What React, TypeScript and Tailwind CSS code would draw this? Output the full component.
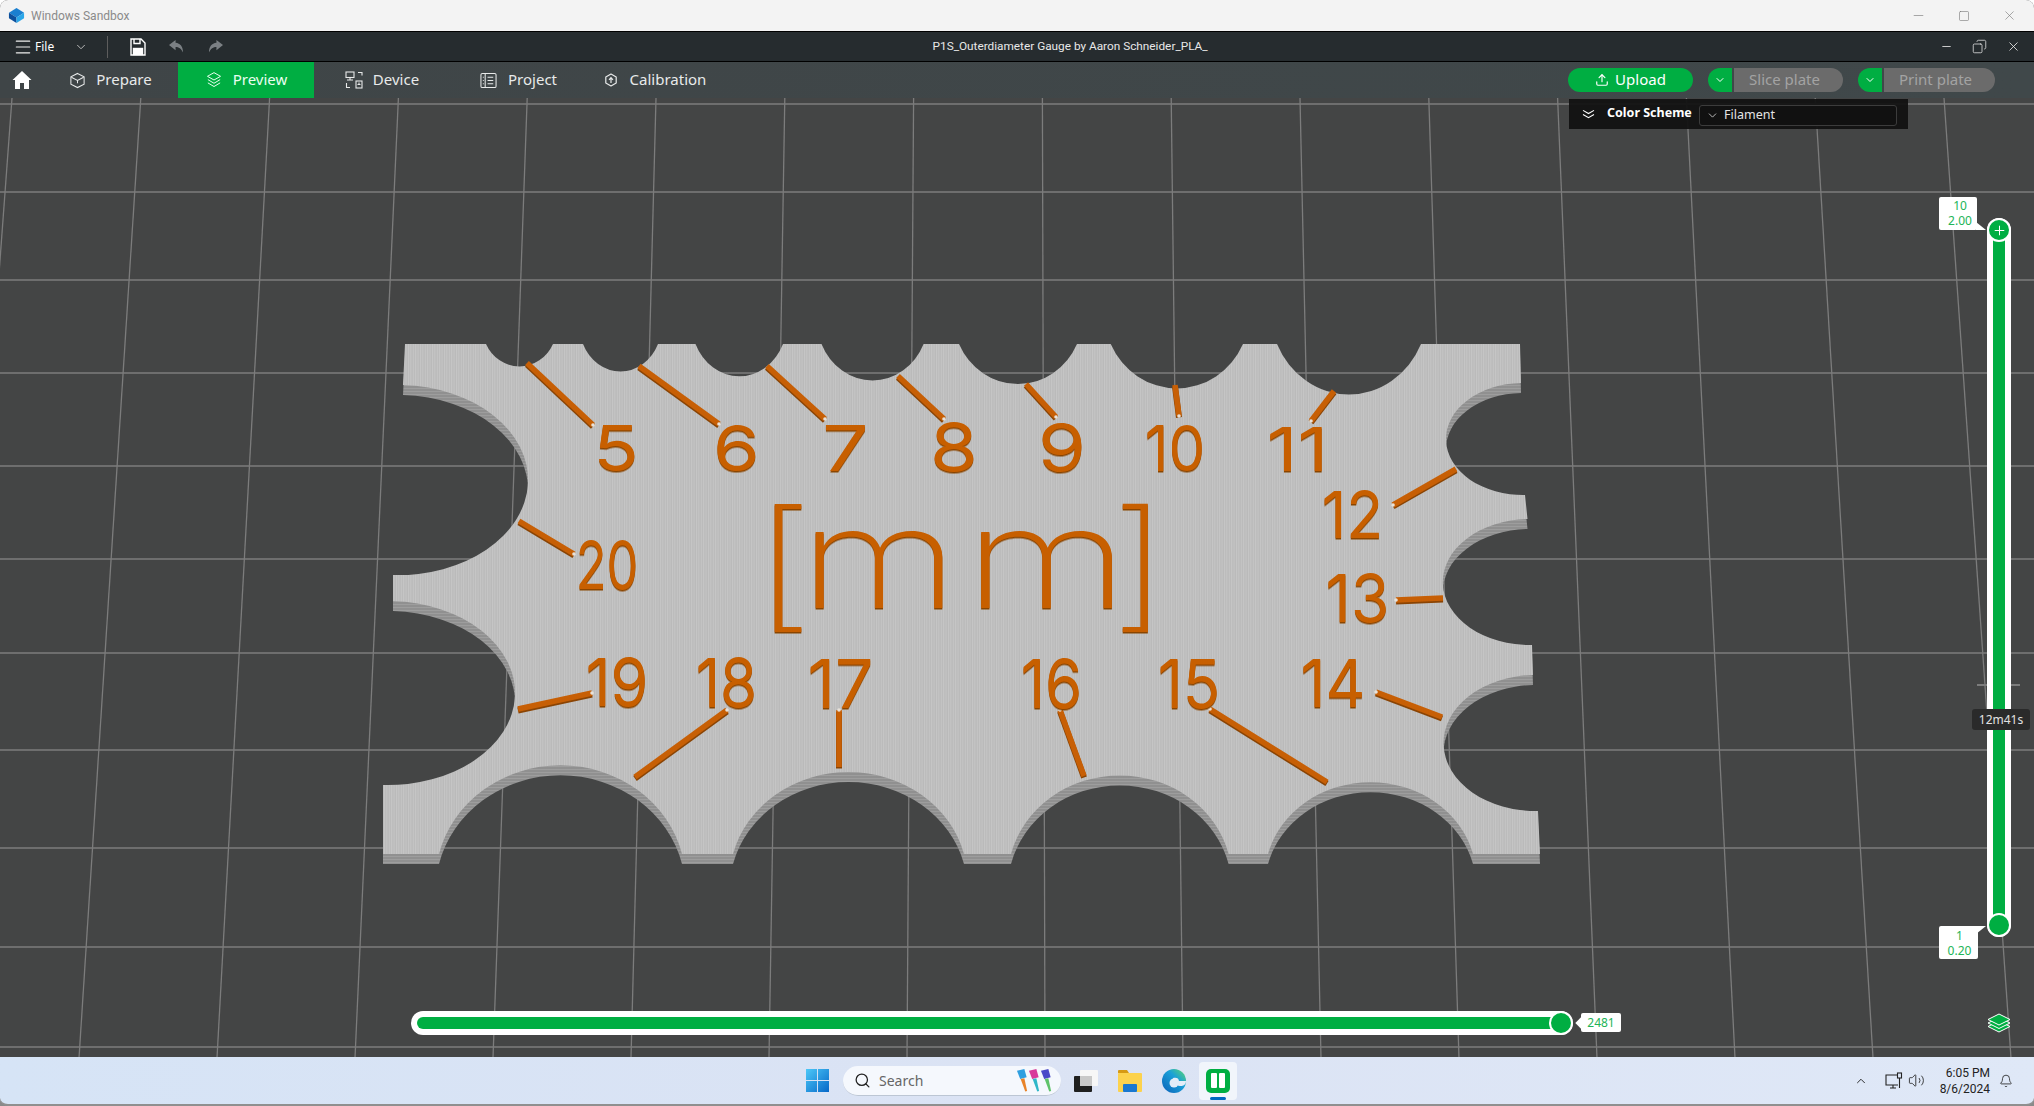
import { Bell, ChevronDown, ChevronUp, Copy, Menu, Minus, Plus, Search, Square, Upload, Volume2, X } from "lucide-react";
import React from "react";

const PLATE =
  "M405 344 H486 A37 39 0 0 0 553 344 H583 A41 46 0 0 0 658 344 H695.5 A48 55 0 0 0 783 344 H821.5 A56 62 0 0 0 923.6 344 H959 A65 69 0 0 0 1077 344 H1110.7 A73 77 0 0 0 1243 344 H1277 A79 86 0 0 0 1421 344 H1520 L1521 383 A77 56 0 0 0 1525 495 L1527.5 519 A87 63 0 0 0 1532 645 L1533 675 A92 68 0 0 0 1538 811 L1540 854 H1473 A105.7 95 0 0 0 1268 854 H1228.6 A112 103 0 0 0 1011 854 H964 A119 108 0 0 0 733 854 H682 A125 116 0 0 0 439 854 H383 L383 785 A127 92 0 0 0 393 601 L393 575 A130 95 0 0 0 403 385 Z";

const H_LINES = [104, 192, 280, 373, 466, 559, 653, 750, 848, 947, 1047];
const V_LINES = Array.from({ length: 16 }, (_, k) => k);

// text, left, right, top, bottom of the printed number
const LABELS: [string, number, number, number, number][] = [
  ["5", 597, 635, 425, 471],
  ["6", 717, 756, 425, 471],
  ["7", 826, 865, 425, 471],
  ["8", 934, 974, 423, 471],
  ["9", 1042, 1082, 424, 471],
  ["10", 1148, 1202, 425, 471],
  ["11", 1270, 1325, 427, 471],
  ["12", 1325, 1380, 491, 538],
  ["13", 1329, 1386, 574, 622],
  ["14", 1304, 1362, 659, 707],
  ["15", 1161, 1217, 659, 708],
  ["16", 1024, 1079, 659, 708],
  ["17", 811, 870, 659, 708],
  ["18", 699, 754, 658, 707],
  ["19", 589, 645, 658, 706],
  ["20", 579, 635, 541, 589],
];

const LEADERS: [number, number, number, number][] = [
  [527, 363, 593, 425],
  [639, 366, 719, 424],
  [767, 366, 825, 419],
  [898, 376, 944, 419],
  [1026, 384, 1056, 417],
  [1175, 385, 1179, 416],
  [1334, 391, 1311, 421],
  [1456, 469, 1393, 505],
  [1443, 598, 1396, 600],
  [1442, 717, 1376, 692],
  [1327, 782, 1210, 709],
  [1084, 776, 1060, 710],
  [839, 767, 839, 710],
  [635, 777, 727, 710],
  [518, 709, 592, 693],
  [519, 521, 574, 554],
];

const Scene = () => (
  <svg viewBox="0 62 2034 995" className="absolute inset-0 w-full h-full">
    <defs>
      <pattern id="hatch" width="2.4" height="4" patternUnits="userSpaceOnUse">
        <rect width="2.4" height="4" fill="#bababa" />
        <rect width="1" height="4" fill="#c6c6c6" />
      </pattern>
      <pattern id="wall" width="4" height="3" patternUnits="userSpaceOnUse">
        <rect width="4" height="3" fill="#909090" />
        <rect width="4" height="1" fill="#9d9d9d" />
      </pattern>
      <filter id="bead" x="-10%" y="-10%" width="120%" height="120%">
        <feDropShadow dx="0" dy="1.5" stdDeviation="0" floodColor="#8a4404" />
      </filter>
    </defs>
    <rect x="0" y="62" width="2034" height="995" fill="#444545" />
    {H_LINES.map((y) => (
      <line key={y} x1="0" x2="2034" y1={y} y2={y} stroke="#7c7c7c" strokeWidth="1.6" />
    ))}
    {V_LINES.map((k) => (
      <line
        key={k}
        x1={12 + 128.8 * k}
        y1="98"
        x2={-59 + 138 * k}
        y2="1058"
        stroke="#7c7c7c"
        strokeWidth="1.3"
      />
    ))}
    <path d={PLATE} transform="translate(0 10)" fill="url(#wall)" />
    <path d={PLATE} fill="url(#hatch)" />
    {LEADERS.map(([x1, y1, x2, y2], i) => (
      <g key={i}>
        <line x1={x1} y1={y1 + 1.5} x2={x2} y2={y2 + 1.5} stroke="#8a4404" strokeWidth="6" />
        <line x1={x1} y1={y1} x2={x2} y2={y2} stroke="#c75f05" strokeWidth="5.5" />
        <circle cx={x2} cy={y2} r="1.8" fill="#e8e2da" />
      </g>
    ))}
    {LABELS.map(([t, x0, x1, y0, y1]) => {
      const w = x1 - x0;
      const pad = w * (t.length > 1 ? 0.06 : 0.1);
      return (
        <text
          key={t}
          x={x0 - pad}
          y={y1}
          fontSize={(y1 - y0) / 0.727}
          fontFamily="Inter"
          fontWeight={400}
          textLength={w + pad * 2}
          lengthAdjust="spacingAndGlyphs"
          fill="#c75f05"
          filter="url(#bead)"
        >
          {t}
        </text>
      );
    })}
    <text fontFamily="Inter" fontSize="139" fill="#c75f05" filter="url(#bead)">
      <tspan x="750" y="612" fontWeight="100" stroke="#c75f05" strokeWidth="2" textLength="66" lengthAdjust="spacingAndGlyphs">
        [
      </tspan>
      <tspan x="799" y="608" fontWeight="200" textLength="160" lengthAdjust="spacingAndGlyphs">
        m
      </tspan>
      <tspan x="964" y="608" fontWeight="200" textLength="165" lengthAdjust="spacingAndGlyphs">
        m
      </tspan>
      <tspan x="1109" y="612" fontWeight="100" stroke="#c75f05" strokeWidth="2" textLength="62" lengthAdjust="spacingAndGlyphs">
        ]
      </tspan>
    </text>
  </svg>
);

const LayersIcon = ({ className }: { className: string }) => (
  <svg viewBox="0 0 22 22" fill="none" stroke="currentColor" strokeWidth="1.2" className={className}>
    <path d="M11 2 19 6.5 11 11 3 6.5Z" />
    <path d="M3.5 10.5 11 15l7.5-4.5" />
    <path d="M3.5 14.5 11 19l7.5-4.5" />
  </svg>
);

const StackIcon = () => (
  <svg viewBox="0 0 24 24" fill="#00ae42" stroke="white" strokeWidth="1" className="absolute left-[1987px] top-[949px] w-6 h-6">
    <path d="M12 10 23 15.5 12 21 1 15.5Z" />
    <path d="M12 6.5 23 12 12 17.5 1 12Z" />
    <path d="M12 3 23 8.5 12 14 1 8.5Z" />
  </svg>
);

const PrepareIcon = () => (
  <svg viewBox="0 0 18 18" fill="none" stroke="currentColor" strokeWidth="1.1" className="w-[17px] h-[17px]">
    <path d="M9 1.5 16 5v8l-7 3.5L2 13V5Z" />
    <path d="M2.5 5.5 9 9l6.5-3.5M9 9v3" />
  </svg>
);

const DeviceIcon = () => (
  <svg viewBox="0 0 18 18" fill="none" stroke="currentColor" strokeWidth="1.1" className="w-[18px] h-[18px]">
    <rect x="1" y="1" width="8" height="5.5" />
    <path d="M5 6.5V9M2 9h6M13 1.5h4v3M1.5 12v4.5H5" />
    <rect x="11" y="10" width="6" height="7" />
    <path d="M12.5 13.5h3M14 11.5v2" />
  </svg>
);

const ProjectIcon = () => (
  <svg viewBox="0 0 18 18" fill="none" stroke="currentColor" strokeWidth="1.1" className="w-[17px] h-[17px]">
    <rect x="1" y="1.5" width="16" height="15" rx="1.5" />
    <path d="M5.5 2v14M8 5.5h6M8 9h6M8 12.5h6M3 5.5h1M3 9h1M3 12.5h1" />
  </svg>
);

const CalibrationIcon = () => (
  <svg viewBox="0 0 14 14" fill="none" stroke="currentColor" strokeWidth="1.2" className="w-[14px] h-[14px]">
    <path d="M7 1 12.2 4v6L7 13 1.8 10V4Z" strokeLinejoin="round" />
    <path d="M7 10V5M5 6.8 7 4.6l2 2.2" />
  </svg>
);

const HomeIcon = () => (
  <svg viewBox="0 0 20 20" fill="white" className="w-5 h-5">
    <path d="M10 1 19.5 10H17v9h-5v-6H8v6H3v-9H.5Z" />
  </svg>
);

const SaveIcon = () => (
  <svg viewBox="0 0 16 18" fill="none" stroke="white" strokeWidth="1.4" className="w-4 h-[18px]">
    <path d="M1 1h10l4 4v12H1Z" />
    <path d="M4 1v4.5h6V1" />
    <rect x="3.5" y="10.5" width="9" height="6" fill="white" />
  </svg>
);

const TurnIcon = ({ flip }: { flip?: boolean }) => (
  <svg viewBox="0 0 18 16" fill="#7b8084" className={flip ? "w-[17px] h-[15px] -scale-x-100" : "w-[17px] h-[15px]"}>
    <path d="M8 1 1 6.5 8 12V8.5c3.5 0 6 1.5 8 6 0-6.5-3-10-8-10.5Z" />
  </svg>
);

const Tab = ({
  icon,
  label,
  active,
  width,
  gap,
}: {
  icon: React.ReactNode;
  label: string;
  active?: boolean;
  width: string;
  gap: string;
}) => (
  <div
    className={`flex items-center h-full justify-center text-[15px] ${width} ${gap} ${
      active ? "bg-[#00ae42] text-[#eafff1]" : "text-[#e8eaea]"
    }`}
  >
    {icon}
    <span className="-mt-[2px]">{label}</span>
  </div>
);

const SplitButton = ({ label, width }: { label: string; width: string }) => (
  <div className="flex items-center h-6 gap-[2px]">
    <div className="w-6 h-6 bg-[#00ae42] rounded-l-full flex items-center justify-center">
      <ChevronDown className="w-3 h-3 text-white" strokeWidth={2} />
    </div>
    <div className={`h-6 bg-[#6b6b6b] rounded-r-full flex items-center justify-center pr-[8px] pb-[2px] text-[#a3a3a3] text-[15px] ${width}`}>
      {label}
    </div>
  </div>
);

const Toolbar = () => (
  <div className="relative flex items-center h-9 bg-gradient-to-r from-[#3f4547] to-[#40484a] text-white">
    <div className="w-[43px] flex justify-center pl-[1px]">
      <HomeIcon />
    </div>
    <Tab icon={<PrepareIcon />} label="Prepare" width="w-[135px]" gap="gap-[10px]" />
    <Tab icon={<LayersIcon className="w-[18px] h-[18px]" />} label="Preview" active width="w-[136px]" gap="gap-[10px]" />
    <Tab icon={<DeviceIcon />} label="Device" width="w-[136px]" gap="gap-[10px]" />
    <Tab icon={<ProjectIcon />} label="Project" width="w-[137px]" gap="gap-[11px]" />
    <Tab icon={<CalibrationIcon />} label="Calibration" width="w-[136px]" gap="gap-[12px]" />
    <div className="ml-auto flex items-center gap-[15px] pr-[39px]">
      <div className="w-[125px] h-6 bg-[#00ae42] rounded-full flex items-center justify-center gap-[6px] pb-[1px] text-[15px] text-white">
        <Upload className="w-[14px] h-[14px]" strokeWidth={2} />
        Upload
      </div>
      <SplitButton label="Slice plate" width="w-[109px]" />
      <SplitButton label="Print plate" width="w-[111px]" />
    </div>
  </div>
);

const ColorScheme = () => (
  <div className="absolute left-[1569px] top-[37px] w-[339px] h-[30px] bg-[#121212]/95 flex items-center pl-[13px] text-white">
    <svg viewBox="0 0 14 12" fill="none" stroke="white" strokeWidth="1.2" className="w-[13px] h-[11px]">
      <path d="M1 1.5 7 5l6-3.5M1 6 7 9.5 13 6" />
    </svg>
    <span className="ml-[12px] text-[12.5px] font-bold w-[92px] shrink-0 -mt-[1px]">Color Scheme</span>
    <div className="w-[198px] h-[21px] rounded-[3px] border border-[#3c3c3c] bg-[#111111] flex items-center pl-[6px] mt-[3px]">
      <ChevronDown className="w-[13px] h-[13px] text-[#dddddd]" strokeWidth={1.5} />
      <span className="ml-[5px] text-[12.5px] text-[#e4e4e4]">Filament</span>
    </div>
  </div>
);

const VerticalSlider = () => (
  <>
    <div className="absolute left-[1977px] top-[622px] w-[43px] h-[2px] bg-[#7c7c7c]" />
    <div className="absolute left-[1987px] top-[156px] w-6 h-[719px] bg-white rounded-full flex justify-center py-[12px]">
      <div className="w-3 h-full bg-[#00ae42]" />
    </div>
    <div className="absolute left-[1987px] top-[156px] w-6 h-6 rounded-full bg-[#00ae42] border-2 border-white flex items-center justify-center">
      <Plus className="w-[15px] h-[15px] text-white" strokeWidth={1.6} />
    </div>
    <div className="absolute left-[1987px] top-[851px] w-6 h-6 rounded-full bg-[#00ae42] border-2 border-white" />
    <div className="absolute left-[1939px] top-[135px] w-[38px] h-[33px] bg-white rounded-[2px] flex flex-col items-center justify-center pl-[4px] pb-[2px] text-[12px] leading-[15px] text-[#22b458]">
      <span>10</span>
      <span>2.00</span>
      <svg viewBox="0 0 10 8" className="absolute left-[37px] top-[25px] w-[10px] h-[8px]">
        <path d="M0 0 10 8H0Z" fill="white" />
      </svg>
    </div>
    <div className="absolute left-[1939px] top-[864px] w-[39px] h-[33px] bg-white rounded-[2px] flex flex-col items-center justify-center pl-[2px] text-[12px] leading-[15px] text-[#22b458]">
      <span>1</span>
      <span>0.20</span>
      <svg viewBox="0 0 10 8" className="absolute left-[37px] top-0 w-[10px] h-[8px]">
        <path d="M0 0H10L0 8Z" fill="white" />
      </svg>
    </div>
    <div className="absolute left-[1972px] top-[647px] w-[58px] h-[21px] bg-[#2a2a2a] rounded-[3px] text-[#e2e2e2] text-[12px] flex items-center justify-center">
      12m41s
    </div>
    <StackIcon />
  </>
);

const HorizontalSlider = () => (
  <>
    <div className="absolute left-[411px] top-[949px] w-[1162px] h-6 bg-white rounded-full flex items-center pl-[6px] pr-[12px]">
      <div className="flex-1 h-3 bg-[#00ae42] rounded-l-full" />
    </div>
    <div className="absolute left-[1549px] top-[949px] w-6 h-6 rounded-full bg-[#00ae42] border-2 border-white" />
    <div className="absolute left-[1581px] top-[951px] w-10 h-[19px] bg-white rounded-[2px] flex items-center justify-center text-[12px] text-[#22b458]">
      2481
      <div className="absolute -left-[4px] top-[6px] w-2 h-2 bg-white rotate-45" />
    </div>
  </>
);

const WindowsLogo = () => (
  <svg viewBox="0 0 24 24" className="w-[23px] h-[23px]">
    <defs>
      <linearGradient id="win" x1="0" y1="0" x2="1" y2="1">
        <stop offset="0" stopColor="#4cc8f8" />
        <stop offset="1" stopColor="#0668c8" />
      </linearGradient>
    </defs>
    <path d="M0 0h11.5v11.5H0ZM12.5 0H24v11.5H12.5ZM0 12.5h11.5V24H0ZM12.5 12.5H24V24H12.5Z" fill="url(#win)" />
  </svg>
);

const Brush = ({ head, handle }: { head: string; handle: string }) => (
  <svg viewBox="0 0 14 26" className="w-[13px] h-[24px] -mr-[1px]">
    <path d="M1 3 9 1l2.5 9-7 2Z" fill={head} />
    <path d="M5 12l4-1 3 14-2 .5Z" fill={handle} />
  </svg>
);

const TaskIcon = () => (
  <svg viewBox="0 0 24 22" className="w-6 h-[22px]">
    <rect x="6" y="0" width="18" height="16" rx="1" fill="#f7f7f7" />
    <rect x="0" y="6" width="18" height="16" rx="1" fill="#1f1f1f" />
    <rect x="6" y="6" width="12" height="10" fill="#c9c9c9" />
  </svg>
);

const FolderIcon = () => (
  <svg viewBox="0 0 24 22" className="w-6 h-[22px]">
    <path d="M0 1a1 1 0 0 1 1-1h8l2 3H0Z" fill="#d69a14" />
    <rect x="0" y="3" width="24" height="19" rx="1" fill="#fcd24d" />
    <rect x="5" y="14" width="14" height="8" rx="1" fill="#1a78d0" />
  </svg>
);

const EdgeIcon = () => (
  <svg viewBox="0 0 24 24" className="w-6 h-6">
    <defs>
      <linearGradient id="edge" x1="0" y1="1" x2="1" y2="0">
        <stop offset="0" stopColor="#0b60b8" />
        <stop offset="0.6" stopColor="#1aa0d8" />
        <stop offset="1" stopColor="#5fd96b" />
      </linearGradient>
    </defs>
    <circle cx="12" cy="12" r="12" fill="url(#edge)" />
    <path d="M11 9c3-1 6 0 6 3h7c0 4-3 5-5 5-3 0-8-1-8-8Z" fill="#e3edf8" />
    <circle cx="12" cy="14" r="4.5" fill="#e3edf8" />
  </svg>
);

const StudioIcon = () => (
  <div className="w-6 h-6 bg-[#00ae42] rounded-[5px] flex items-center justify-center gap-[2px]">
    <div className="w-[6px] h-[15px] bg-white rounded-[1px]" />
    <div className="w-[6px] h-[15px] bg-white rounded-[1px]" />
  </div>
);

const NetworkIcon = () => (
  <svg viewBox="0 0 18 18" fill="none" stroke="#222222" strokeWidth="1.1" className="w-[18px] h-[18px]">
    <path d="M12 3H1v10h12M5 16h6M8 13v3M14.5 6v10" />
    <rect x="12.5" y="1" width="4" height="5" />
  </svg>
);

const Taskbar = () => (
  <div className="relative h-[49px] shrink-0 bg-gradient-to-r from-[#d6e4f6] via-[#dbe3f4] to-[#dfe8f7] flex items-center border-b-2 border-[#8f8f8f] rounded-b-lg pl-[806px]">
    <WindowsLogo />
    <div className="ml-[14px] w-[218px] h-[30px] bg-[#f5f8fd] rounded-full border-b border-[#bcc6d4] flex items-center pl-[11px]">
      <Search className="w-[17px] h-[17px] text-[#222222]" strokeWidth={1.8} />
      <span className="ml-[8px] text-[14px] text-[#666666]">Search</span>
      <div className="ml-auto mr-[9px] flex">
        <Brush head="#2f9fe0" handle="#e8832a" />
        <Brush head="#d83a9a" handle="#2fb7c8" />
        <Brush head="#4a4ac8" handle="#5fc36a" />
      </div>
    </div>
    <div className="ml-[13px]">
      <TaskIcon />
    </div>
    <div className="ml-[20px]">
      <FolderIcon />
    </div>
    <div className="ml-[20px]">
      <EdgeIcon />
    </div>
    <div className="relative ml-[13px] w-[38px] h-[38px] bg-[#f1f5fb] rounded-[4px] flex items-center justify-center">
      <StudioIcon />
      <div className="absolute bottom-0 left-[11px] w-4 h-[3px] rounded-full bg-[#0067c0]" />
    </div>
    <div className="ml-auto flex items-center pr-[21px] text-[#222222]">
      <ChevronUp className="w-[14px] h-[14px]" strokeWidth={1.6} />
      <div className="ml-[17px]">
        <NetworkIcon />
      </div>
      <Volume2 className="ml-[5px] w-[17px] h-[17px]" strokeWidth={1.2} />
      <div className="ml-[20px] flex flex-col items-end text-[12px] leading-[16px] w-[45px] whitespace-nowrap font-['Roboto',sans-serif]">
        <span>6:05 PM</span>
        <span>8/6/2024</span>
      </div>
      <Bell className="ml-[9px] w-[14px] h-[14px]" strokeWidth={1.4} />
    </div>
  </div>
);

export default function App() {
  return (
    <div className="w-[2034px] h-[1106px] flex flex-col overflow-hidden bg-[#8a8a8a] font-['Noto_Sans',sans-serif] rounded-t-lg">
      <div className="h-[31px] shrink-0 bg-[#f3f3f3] flex items-center pl-[8px] pr-[17px] text-[#8a8a8a] rounded-t-lg">
        <svg viewBox="0 0 18 18" className="w-[17px] h-[17px]">
          <path d="M9 1 17 6 9 11 1 6Z" fill="#1a7fd0" />
          <path d="M1 6v6l8 5v-6Z" fill="#0c4f9c" />
          <path d="M17 6v6l-8 5v-6Z" fill="#2aa6e8" />
        </svg>
        <span className="ml-[6px] mt-[1px] text-[12px] font-['Roboto',sans-serif]">Windows Sandbox</span>
        <div className="ml-auto flex items-center gap-[32px] text-[#777777]">
          <Minus className="w-[15px] h-[15px]" strokeWidth={1} />
          <Square className="w-[12px] h-[12px]" strokeWidth={1.2} />
          <X className="w-[15px] h-[15px]" strokeWidth={1} />
        </div>
      </div>
      <div className="h-[31px] shrink-0 bg-[#262c2f] border-y border-black flex items-center relative text-white pl-[14px] pr-[13px]">
        <Menu className="w-5 h-5 text-[#eeeeee] -ml-[1px]" strokeWidth={1.4} />
        <span className="ml-[2px] text-[12px]">File</span>
        <ChevronDown className="ml-[20px] w-[14px] h-[14px] text-[#cccccc]" strokeWidth={1.5} />
        <div className="ml-[19px] w-px h-[22px] bg-[#5d5d5d]" />
        <div className="ml-[22px]">
          <SaveIcon />
        </div>
        <div className="ml-[22px]">
          <TurnIcon />
        </div>
        <div className="ml-[22px]">
          <TurnIcon flip />
        </div>
        <span className="flex-1 text-center text-[11.8px] text-[#e8e8e8] -ml-[24px] font-['Roboto',sans-serif]">
          P1S_Outerdiameter Gauge by Aaron Schneider_PLA_
        </span>
        <div className="flex items-center gap-[19px] text-[#eeeeee]">
          <Minus className="w-[13px] h-[13px]" strokeWidth={1.5} />
          <Copy className="w-[15px] h-[15px] -scale-x-100" strokeWidth={1.2} />
          <X className="w-[15px] h-[15px]" strokeWidth={1.3} />
        </div>
      </div>
      <div className="relative flex-1">
        <Scene />
        <Toolbar />
        <ColorScheme />
        <VerticalSlider />
        <HorizontalSlider />
      </div>
      <Taskbar />
    </div>
  );
}
